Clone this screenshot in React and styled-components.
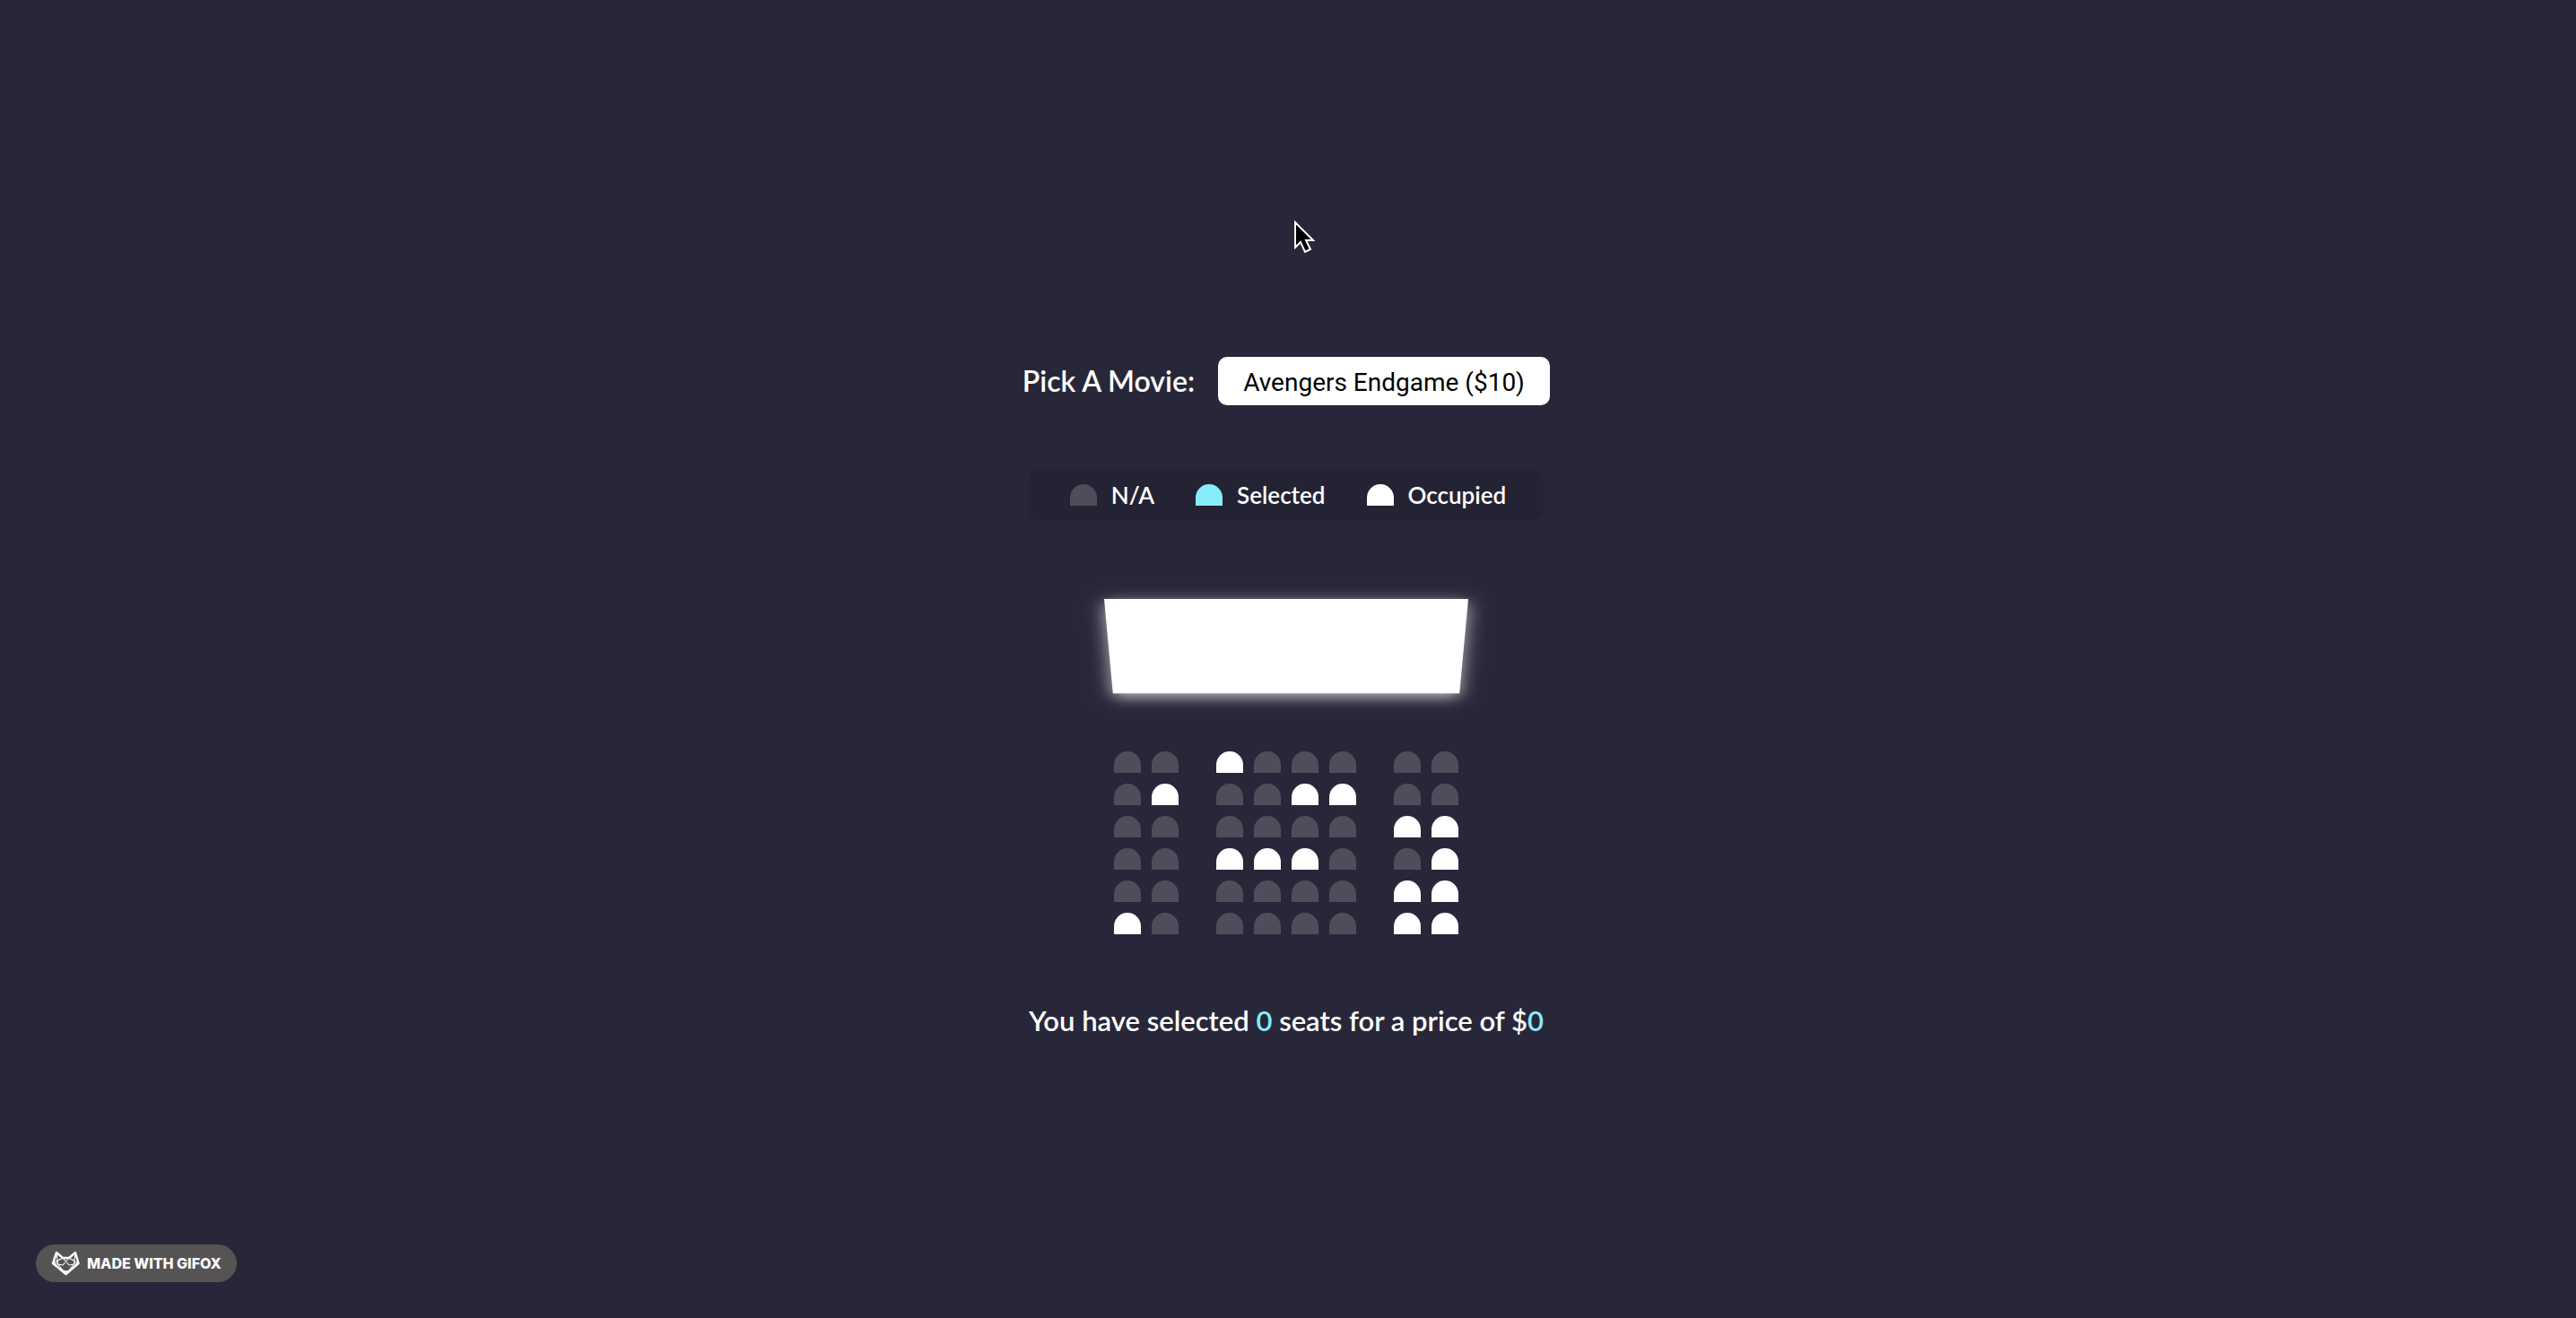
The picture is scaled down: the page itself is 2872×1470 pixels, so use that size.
import React, { useState } from "react";
import styled, { createGlobalStyle } from "styled-components";

const GlobalStyle = createGlobalStyle`
  * { box-sizing: border-box; }
  body {
    margin: 0;
    background: #282739;
    color: #fff;
    font-family: Lato, sans-serif;
    font-size: 32px;
    font-weight: 600;
    line-height: 40px;
  }
`;

const Page = styled.main`
  min-height: 100vh;
  display: flex;
  flex-direction: column;
  align-items: center;
  justify-content: center;
  padding: 86px 4px 0 0;
`;

const MoviePicker = styled.div`
  display: flex;
  align-items: center;
  gap: 26px;
  margin-bottom: 72px;
`;

const MovieSelect = styled.select`
  appearance: none;
  border: 0;
  border-radius: 10px;
  background: #fff;
  color: #000;
  width: 370px;
  height: 54px;
  padding: 2px 20px 0 28px;
  font-family: Roboto, sans-serif;
  font-size: 28px;
  font-weight: 400;
`;

const Legend = styled.ul`
  list-style: none;
  margin: 0 0 42px;
  padding: 0 42px 0 40px;
  height: 56px;
  display: flex;
  align-items: center;
  gap: 40px;
  border-radius: 10px;
  background: rgba(0, 0, 0, 0.1);
  font-size: 26px;
`;

const LegendItem = styled.li`
  display: flex;
  align-items: center;
  gap: 16px;
  padding-left: 6px;
`;

const colors = { free: "#4e4d5a", selected: "#86ecf9", occupied: "#fff" };

const Swatch = styled.span`
  width: 30px;
  height: 24px;
  border-radius: 15px 15px 0 0;
  background: ${(p) => colors[p.$state]};
`;

const Theater = styled.section`
  perspective: 2000px;
  display: flex;
  flex-direction: column;
  gap: 46px;
  padding: 30px 6px 36px;
`;

const Screen = styled.div`
  height: 140px;
  margin: 0 -6px;
  background: #fff;
  transform: rotateX(-45deg);
  box-shadow: 0 6px 20px rgba(255, 255, 255, 0.7);
`;

const Seats = styled.div`
  display: flex;
  flex-direction: column;
  gap: 12px;
`;

const Row = styled.div`
  display: flex;
  gap: 12px;
`;

const Seat = styled.button`
  appearance: none;
  border: 0;
  padding: 0;
  width: 30px;
  height: 24px;
  border-radius: 15px 15px 0 0;
  background: ${(p) => colors[p.$state]};
  cursor: pointer;

  &:nth-of-type(2) {
    margin-right: 30px;
  }
  &:nth-last-of-type(2) {
    margin-left: 30px;
  }
  &:disabled {
    cursor: default;
  }
`;

const Summary = styled.p`
  margin: 40px 0 0;
  font-size: 31px;
`;

const Count = styled.span`
  color: #86ecf9;
`;

const Badge = styled.a`
  position: fixed;
  left: 40px;
  bottom: 40px;
  height: 42px;
  padding: 0 17px;
  display: flex;
  align-items: center;
  gap: 8px;
  border-radius: 21px;
  background: #555354;
  color: #fff;
  text-decoration: none;
  font-family: Inter, sans-serif;
  font-size: 16px;
  font-weight: 800;
  line-height: 20px;
`;

const Pointer = styled.svg`
  position: absolute;
  left: 50%;
  top: 243px;
  margin-left: 4px;
  pointer-events: none;
`;

const movies = [
  { title: "Avengers Endgame", price: 10 },
  { title: "Joker", price: 12 },
  { title: "Toy Story 4", price: 8 },
  { title: "The Lion King", price: 9 },
];

const plan = [
  "..#.....",
  ".#..##..",
  "......##",
  "..###..#",
  "......##",
  "#.....##",
];

export default function App() {
  const [price, setPrice] = useState(10);
  const [selected, setSelected] = useState([]);
  const toggle = (id) =>
    setSelected((s) => (s.includes(id) ? s.filter((x) => x !== id) : [...s, id]));

  return (
    <Page>
      <GlobalStyle />
      <MoviePicker>
        <label htmlFor="movie">Pick A Movie:</label>
        <MovieSelect id="movie" value={price} onChange={(e) => setPrice(+e.target.value)}>
          {movies.map((m) => (
            <option key={m.title} value={m.price}>
              {`${m.title} ($${m.price})`}
            </option>
          ))}
        </MovieSelect>
      </MoviePicker>

      <Legend>
        <LegendItem><Swatch $state="free" />N/A</LegendItem>
        <LegendItem><Swatch $state="selected" />Selected</LegendItem>
        <LegendItem><Swatch $state="occupied" />Occupied</LegendItem>
      </Legend>

      <Theater>
        <Screen />
        <Seats>
          {plan.map((line, r) => (
            <Row key={r}>
              {[...line].map((mark, c) => {
                const id = `${r + 1}-${c + 1}`;
                const state =
                  mark === "#" ? "occupied" : selected.includes(id) ? "selected" : "free";
                return (
                  <Seat
                    key={id}
                    type="button"
                    aria-label={`Seat ${id}`}
                    disabled={mark === "#"}
                    $state={state}
                    onClick={() => toggle(id)}
                  />
                );
              })}
            </Row>
          ))}
        </Seats>
      </Theater>

      <Summary>
        You have selected <Count>{selected.length}</Count> seats for a price of $
        <Count>{selected.length * price}</Count>
      </Summary>

      <Badge href="#gifox">
        <svg width="32" height="28" viewBox="0 0 32 28" fill="none" stroke="#fff" strokeLinejoin="round" aria-hidden="true">
          <path strokeWidth="2.4" d="M6 2 L13 8 H20 L27 2 L30.5 14 L16.5 26 L2 14 Z" />
          <path strokeWidth="1.1" d="M2 14 L13 8 L20 16 L30.5 14 L20 8 L13 16 Z M6 2 L7.500 15 L16.500 26 L25.500 15 L27 2" />
          <path fill="#fff" d="M10 21 L14 22.500 H19 L23 21 L16.500 26.500 Z" />
        </svg>
        MADE WITH GIFOX
      </Badge>

      <Pointer width="26" height="42" viewBox="0 0 26 42" aria-hidden="true">
        <path d="M4 5 V33 L10 27 L15 38 L21 35 L16 25 H24 Z" fill="#000" stroke="#fff" strokeWidth="2" />
      </Pointer>
    </Page>
  );
}
